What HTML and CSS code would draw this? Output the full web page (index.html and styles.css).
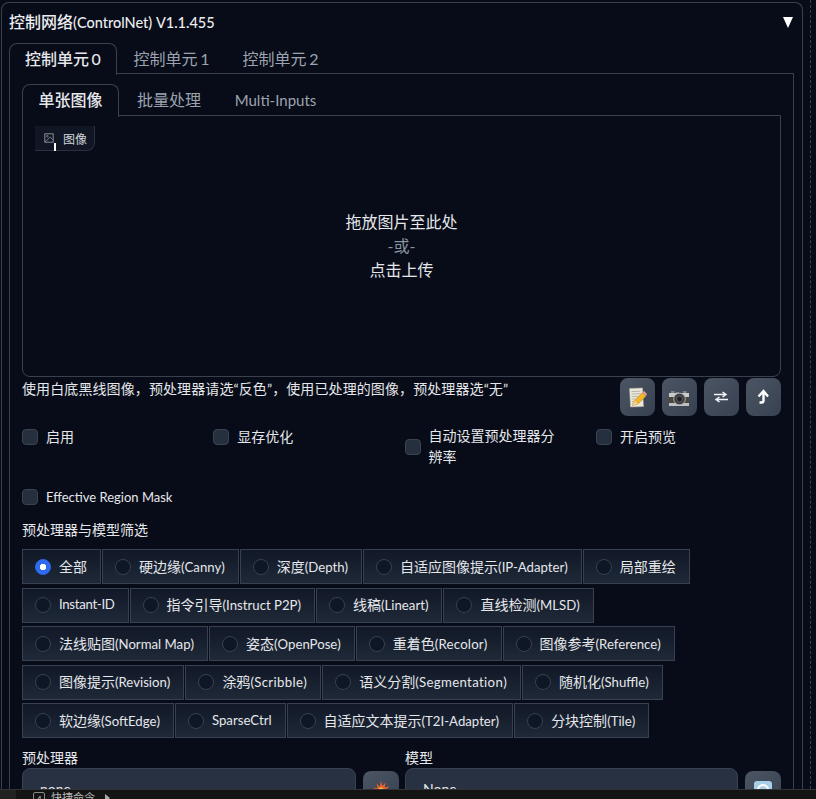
FILE: index.html
```html
<!DOCTYPE html>
<html lang="zh">
<head>
<meta charset="utf-8">
<title>ControlNet</title>
<link rel="stylesheet" href="styles.css">
</head>
<body>
<div class="app">
  <div class="stage">
    <main class="panel">
      <header class="panel-head">
        <span class="panel-title">控制网络<span class="title-en">(ControlNet) V1.1.455</span></span>
        <span class="caret"></span>
      </header>
      <div class="tabs outer-tabs">
        <button class="tab active">控制单元 0</button>
        <button class="tab">控制单元 1</button>
        <button class="tab">控制单元 2</button>
      </div>
      <section class="tab-body outer-body">
        <div class="tabs inner-tabs">
          <button class="tab active">单张图像</button>
          <button class="tab wide">批量处理</button>
          <button class="tab latin">Multi-Inputs</button>
        </div>
        <div class="dropzone">
          <div class="image-badge">
            <svg class="badge-icon" viewBox="0 0 12 12" width="10" height="10"><rect x="1" y="1" width="10" height="10" fill="none" stroke="#9ca3af" stroke-width="1"/><circle cx="4" cy="4" r="1" fill="none" stroke="#9ca3af" stroke-width=".8"/><path d="M1.5 10.5 7.5 5l3 3" fill="none" stroke="#9ca3af" stroke-width=".9"/></svg>
            <span>图像</span>
            <i class="caret-mark"></i>
          </div>
          <div class="drop-text">
            <div>拖放图片至此处</div>
            <div class="drop-or">-或-</div>
            <div>点击上传</div>
          </div>
        </div>
        <div class="note-row">
          <p class="note">使用白底黑线图像，预处理器请选“反色”，使用已处理的图像，预处理器选“无”</p>
          <div class="tools">
            <button class="tool"><svg viewBox="0 0 20 21" width="20" height="21"><path d="M2.500 1.500 15.500 1l1 18.500-13 .5z" fill="#ece8da" stroke="#b9b5a6" stroke-width=".5"/><path d="M4.500 4.500l9-.3M4.500 7l9-.3M4.500 9.500l7-.2M4.800 12l4-.1M5 14.500h3M5 17h2" stroke="#a9a59b" stroke-width=".8"/><path d="M5.500 18.500 7.500 13.500 15.500 5.500l3.500 3.500-8 8z" fill="#f2b728" stroke="#b57f17" stroke-width=".5"/><path d="M5.500 18.500 7.500 13.500l3.500 3.500z" fill="#e9d3a2"/><path d="M15.500 5.500l1.500-1.500 3 3L19 9z" fill="#e79bab"/></svg></button>
            <button class="tool"><svg viewBox="0 0 22 20" width="22" height="20"><path d="M3 6V4h3.500v2zM8 6V5h3v1zM15 6V4h3.500v2z" fill="#7f8387"/><rect x="1" y="6" width="20" height="4" fill="#c9cbca"/><rect x="1" y="10" width="20" height="6" fill="#4c463c"/><rect x="1" y="16" width="20" height="3" fill="#bfc1c0"/><circle cx="11.500" cy="12" r="5.800" fill="#3a3b3d" stroke="#a9abad" stroke-width="1"/><circle cx="11.500" cy="12" r="3" fill="#1f2022" stroke="#777" stroke-width=".7"/></svg></button>
            <button class="tool"><svg viewBox="0 0 16 14" width="16" height="14"><path d="M1 4.500h11M9.500 2l3.500 2.500-3.500 2.500M15 9.500H4M6.500 7 3 9.500 6.500 12" fill="none" stroke="#f3f4f6" stroke-width="1.500"/></svg></button>
            <button class="tool"><svg viewBox="0 0 14 16" width="14" height="16"><path d="M2.500 7.500 7.500 2l4.500 5.500M7.500 3v8.500q0 2-2 2H3.500" fill="none" stroke="#fff" stroke-width="2.400"/></svg></button>
          </div>
        </div>
        <div class="check-grid">
          <label class="check"><span class="box"></span><span>启用</span></label>
          <label class="check"><span class="box"></span><span>显存优化</span></label>
          <label class="check centered"><span class="box"></span><span>自动设置预处理器分辨率</span></label>
          <label class="check"><span class="box"></span><span>开启预览</span></label>
        </div>
        <label class="check solo"><span class="box"></span><span class="en-label">Effective Region Mask</span></label>
        <div class="field-label filter-label">预处理器与模型筛选</div>
        <div class="radios">
          <div class="radio-row">
            <label class="radio on"><span class="dot"></span><span>全部</span></label>
            <label class="radio"><span class="dot"></span><span>硬边缘<span class="en">(Canny)</span></span></label>
            <label class="radio"><span class="dot"></span><span>深度<span class="en">(Depth)</span></span></label>
            <label class="radio"><span class="dot"></span><span>自适应图像提示<span class="en">(IP-Adapter)</span></span></label>
            <label class="radio"><span class="dot"></span><span>局部重绘</span></label>
          </div>
          <div class="radio-row">
            <label class="radio"><span class="dot"></span><span class="en en-tight">Instant-ID</span></label>
            <label class="radio"><span class="dot"></span><span>指令引导<span class="en">(Instruct P2P)</span></span></label>
            <label class="radio"><span class="dot"></span><span>线稿<span class="en">(Lineart)</span></span></label>
            <label class="radio"><span class="dot"></span><span>直线检测<span class="en">(MLSD)</span></span></label>
          </div>
          <div class="radio-row">
            <label class="radio"><span class="dot"></span><span>法线贴图<span class="en">(Normal Map)</span></span></label>
            <label class="radio"><span class="dot"></span><span>姿态<span class="en">(OpenPose)</span></span></label>
            <label class="radio"><span class="dot"></span><span>重着色<span class="en en-soft">(Recolor)</span></span></label>
            <label class="radio"><span class="dot"></span><span>图像参考<span class="en">(Reference)</span></span></label>
          </div>
          <div class="radio-row">
            <label class="radio"><span class="dot"></span><span>图像提示<span class="en">(Revision)</span></span></label>
            <label class="radio"><span class="dot"></span><span>涂鸦<span class="en en-loose">(Scribble)</span></span></label>
            <label class="radio"><span class="dot"></span><span>语义分割<span class="en en-loose">(Segmentation)</span></span></label>
            <label class="radio"><span class="dot"></span><span>随机化<span class="en">(Shuffle)</span></span></label>
          </div>
          <div class="radio-row">
            <label class="radio"><span class="dot"></span><span>软边缘<span class="en">(SoftEdge)</span></span></label>
            <label class="radio"><span class="dot"></span><span class="en">SparseCtrl</span></label>
            <label class="radio"><span class="dot"></span><span>自适应文本提示<span class="en">(T2I-Adapter)</span></span></label>
            <label class="radio"><span class="dot"></span><span>分块控制<span class="en">(Tile)</span></span></label>
          </div>
        </div>
        <div class="selects">
          <div class="select-col">
            <div class="field-label">预处理器</div>
            <div class="select-row">
              <div class="select">none</div>
              <button class="tool"><svg viewBox="0 0 20 20" width="20" height="20"><path d="M10 1l1.500 5 3-3.500-.8 5 4.500-1-3.500 3.500 4 2-4.500.5 1 4-3.500-3-1.700 4.500-1.700-4.500-3.500 3 1-4-4.500-.5 4-2L2 7.500l4.500 1-.8-5 3 3.500z" fill="#e8622a"/><circle cx="10" cy="10" r="2.500" fill="#f5c04a"/></svg></button>
            </div>
          </div>
          <div class="select-col">
            <div class="field-label">模型</div>
            <div class="select-row">
              <div class="select model">None</div>
              <button class="tool"><svg viewBox="0 0 20 20" width="20" height="20"><rect x="1" y="1" width="18" height="18" rx="3" fill="#a9cfe6"/><circle cx="10" cy="10" r="5" fill="none" stroke="#fff" stroke-width="2"/></svg></button>
            </div>
          </div>
        </div>
      </section>
    </main>
    <div class="dashed"></div>
  </div>
  <footer class="bottom">
    <span class="bottom-side"></span>
    <span class="bottom-key">4</span>
    <span>快捷命令</span>
    <span class="bottom-arrow"></span>
  </footer>
</div>
</body>
</html>
```

FILE: styles.css
```css
* { box-sizing: border-box; }
html, body { margin: 0; height: 100%; overflow: hidden; }
body {
  background: #080c18;
  color: #e5e7eb;
  font-family: "Lato", "Noto Sans CJK SC", "Noto Sans", sans-serif;
  font-size: 14px;
}
button { font-family: inherit; color: inherit; }
.app { height: 799px; display: flex; flex-direction: column; }
.stage { flex: 0 0 789px; height: 789px; overflow: hidden; display: flex; align-items: flex-start; }
.panel {
  flex: 0 0 802px;
  min-width: 0;
  margin: 2px 0 0 1px;
  height: 900px;
  border: 1px solid #3b404d;
  border-bottom: 0;
  border-radius: 8px 8px 0 0;
  padding: 0 8px 0 7px;
}
.dashed { margin-left: 7px; width: 0; height: 789px; border-left: 1px dashed #3b404d; }
.panel-head { height: 40px; display: flex; align-items: center; justify-content: space-between; padding-bottom: 2px; }
.panel-title { font-size: 16px; line-height: 20px; font-weight: 500; color: #eceef1; }
.title-en { font-size: 14.500px; }
.caret {
  margin-right: 1px;
  width: 0; height: 0;
  border-left: 5.500px solid transparent;
  border-right: 5.500px solid transparent;
  border-top: 11px solid #fff;
}
.tabs { display: flex; align-items: stretch; position: relative; z-index: 1; }
.tab {
  background: transparent;
  border: 1px solid transparent;
  border-bottom: 0;
  padding: 0 0 2px;
  color: #9ca3af;
  font-size: 16px;
  line-height: 20px;
  text-align: center;
}
.tab.active {
  color: #e5e7eb;
  border-color: #3b404d;
  border-radius: 8px 8px 0 0;
  background: #080c18;
  margin-bottom: -1px;
  font-weight: 500;
}
.outer-tabs { height: 31px; }
.outer-tabs .tab { width: 109px; padding-bottom: 1px; word-spacing: -1.500px; }
.outer-tabs .tab.active { width: 108px; }
.outer-body {
  margin-top: -1px;
  height: 800px;
  border: 1px solid #3b404d;
  padding: 10px 12px 0 12px;
}
.inner-tabs { height: 32px; }
.inner-tabs .tab { width: 97px; }
.inner-tabs .tab.wide { width: 100px; }
.inner-tabs .tab.latin { width: 113px; font-size: 15px; }
.dropzone {
  margin-top: -1px;
  height: 262px;
  border: 1px solid #3b404d;
  border-radius: 0 0 8px 8px;
  position: relative;
  display: flex;
  align-items: center;
  justify-content: center;
}
.image-badge {
  position: absolute;
  left: 12px;
  top: 10px;
  width: 60px;
  height: 25px;
  display: flex;
  align-items: center;
  gap: 9px;
  padding-left: 9px;
  background: #101623;
  border-right: 1px solid #2b3140;
  border-bottom: 1px solid #2b3140;
  border-radius: 0 0 8px 0;
  font-size: 12px;
  color: #d1d5db;
}
.badge-icon { flex: none; }
.caret-mark { position: absolute; left: 19px; top: 17px; width: 2px; height: 8px; background: #fff; }
.drop-text { text-align: center; font-size: 16px; line-height: 24px; color: #e5e7eb; }
.drop-or { color: #8b93a1; }
.note-row { display: flex; justify-content: space-between; height: 40px; margin-top: 1px; }
.note { margin: 1px 0 0; font-size: 14px; line-height: 20px; letter-spacing: .1px; color: #e5e7eb; white-space: nowrap; }
.tools { display: flex; gap: 6.500px; }
.tool {
  flex: none;
  width: 35.500px;
  height: 38px;
  padding: 0;
  border: 0;
  border-radius: 8px;
  background: linear-gradient(to bottom right, #4b5563, #374151);
  display: flex;
  align-items: center;
  justify-content: center;
}
.check-grid { display: grid; grid-template-columns: repeat(3, 191.300px) 1fr; margin-top: 9px; min-height: 44px; }
.check { display: flex; align-items: flex-start; gap: 8px; font-size: 14px; line-height: 20px; color: #e5e7eb; }
.box {
  flex: none;
  width: 16px;
  height: 16px;
  margin-top: 2px;
  border: 1px solid #3a4352;
  border-radius: 4px;
  background: #252f3e;
}
.check.centered { align-items: center; align-self: start; margin-top: -2px; padding-right: 30px; line-height: 21px; }
.solo { margin-top: 16px; }
.en-label { font-size: 13px; }
.field-label { font-size: 14px; line-height: 20px; color: #e5e7eb; }
.filter-label { margin-top: 13px; }
.radios { display: flex; flex-direction: column; gap: 3.500px; margin-top: 9px; }
.radio-row { display: flex; gap: 1px; }
.radio {
  height: 35px;
  padding: 0 13px 2px 12px;
  display: flex;
  align-items: center;
  gap: 8px;
  border: 1px solid #374151;
  background: linear-gradient(to bottom, #111827, #1f2937);
  font-size: 14px;
  color: #e5e7eb;
}
.en { font-size: 13.200px; }
.en-tight { letter-spacing: -.3px; }
.en-soft { letter-spacing: .2px; }
.en-loose { letter-spacing: .35px; }
.dot {
  flex: none;
  width: 16px;
  height: 16px;
  margin-top: 2px;
  border-radius: 50%;
  background: #0f1726;
  border: 1px solid #374151;
}
.radio.on .dot {
  background: radial-gradient(circle, #fff 0 3px, #2f6bf0 3.500px);
  border-color: #2f6bf0;
}
.selects { display: grid; grid-template-columns: 383px 376px; margin-top: 10px; }
.select-row { display: flex; gap: 7px; align-items: flex-start; }
.select {
  flex: 0 0 334px;
  height: 42px;
  padding: 10px 17px;
  border: 1px solid #374151;
  border-radius: 8px;
  background: #273141;
  font-size: 14px;
  line-height: 20px;
}
.select.model { flex-basis: 333px; }
.select-row .tool { margin-top: 3px; }
.bottom {
  flex: 0 0 10px;
  height: 10px;
  overflow: hidden;
  background: #141414;
  border-top: 1px solid #333;
  display: flex;
  align-items: flex-start;
  gap: 6px;
  font-size: 11px;
  line-height: 16px;
  color: #b8b8b8;
}
.bottom-side { width: 16px; height: 9px; margin-right: 11px; background: #222; }
.bottom-key { width: 12px; height: 16px; margin-top: 2px; border: 1px solid #888; border-radius: 2px; font-size: 9px; line-height: 14px; text-align: center; }
.bottom-arrow { margin: 4px 0 0 4px; width: 0; height: 0; border-left: 5px solid #aaa; border-top: 4px solid transparent; border-bottom: 4px solid transparent; }
```
